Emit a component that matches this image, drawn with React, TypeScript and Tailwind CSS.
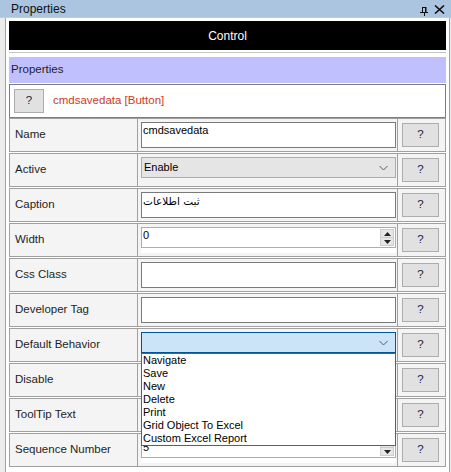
import React from "react";

const Btn = () => (
  <div className="w-[37px] h-[24px] bg-[#e1e1e1] border border-[#adadad] flex items-center justify-center text-[#1a1a40] text-[11.5px]">?</div>
);

const Chevron = () => (
  <svg width="9" height="5" viewBox="0 0 9 5" className="absolute right-[7px] top-1/2 -translate-y-1/2">
    <polyline points="0.5,0.5 4.5,4.5 8.5,0.5" fill="none" stroke="#5a5a5a" strokeWidth="1" />
  </svg>
);

const Spinner = () => (
  <div className="absolute right-[1px] top-[1px] bottom-[1px] w-[14px] flex flex-col bg-[#e6e6e6] border border-[#cdcdcd]">
    <div className="flex-1 flex items-center justify-center border-b border-[#cdcdcd]">
      <svg width="7" height="4" viewBox="0 0 7 4"><polygon points="0,4 7,4 3.5,0" fill="#222" /></svg>
    </div>
    <div className="flex-1 flex items-center justify-center">
      <svg width="7" height="4" viewBox="0 0 7 4"><polygon points="0,0 7,0 3.5,4" fill="#222" /></svg>
    </div>
  </div>
);

type Kind = "text" | "select" | "spin" | "open";

const Row = ({ label, kind, value, children }: { label: string; kind: Kind; value?: React.ReactNode; children?: React.ReactNode }) => {
  let field: React.ReactNode = null;
  if (kind === "text") {
    field = (
      <div className="w-[255px] h-[26px] bg-white border border-[#7a7a7a] pl-[1px] leading-[14px] text-[11px] text-black overflow-hidden">
        {value}
      </div>
    );
  } else if (kind === "select") {
    field = (
      <div className="relative w-[255px] h-[21px] bg-[#e5e5e5] border border-[#acacac] pl-[2px] flex items-center text-[11px] text-black">
        {value}
        <Chevron />
      </div>
    );
  } else if (kind === "spin") {
    field = (
      <div className="w-[255px] h-[26px] bg-white">
        <div className="relative w-[255px] h-[21px] bg-white border border-[#adadad] pl-[1px] leading-[14px] text-[11px] text-black">
          {value}
          <Spinner />
        </div>
      </div>
    );
  } else {
    field = (
      <div className="relative w-[255px] h-[21px] bg-[#cce4f7] border border-[#005499] flex items-center text-[11px]">
        <Chevron />
        {children}
      </div>
    );
  }
  return (
    <div className="flex h-[34px] border border-[#a0a0a0] bg-[#f4f4f4] mb-px">
      <div className="w-[128px] flex items-center pl-[5px] text-[#1e1e1e] border-r border-[#a0a0a0]">{label}</div>
      <div className="w-[260px] pl-[3px] pt-[3px] border-r border-[#a0a0a0]">{field}</div>
      <div className="w-[45px] flex items-center pl-[4px]">
        <Btn />
      </div>
    </div>
  );
};

export default function App() {
  const items = ["Navigate", "Save", "New", "Delete", "Print", "Grid Object To Excel", "Custom Excel Report"];
  return (
    <div className="w-[451px] h-[472px] overflow-hidden bg-[#ececec] flex flex-col font-['Liberation_Sans',Arial,sans-serif] text-[11.5px]">
      <div className="h-[17px] bg-[#abc4df] flex items-center pl-[11px] relative text-[#111] text-[12px]">
        <span>Properties</span>
        <svg width="9" height="9" viewBox="0 0 9 9" className="absolute left-[420px] top-[7px]">
          <rect x="2.5" y="0.5" width="3" height="5" fill="none" stroke="#111" strokeWidth="1" />
          <rect x="5" y="0" width="1.5" height="6" fill="#111" />
          <rect x="0" y="5" width="8" height="1" fill="#111" />
          <rect x="4" y="6" width="1" height="3" fill="#111" />
        </svg>
        <svg width="11" height="9" viewBox="0 0 11 9" className="absolute left-[434px] top-[5px]">
          <path d="M1 0.5 L10 8.5 M10 0.5 L1 8.5" stroke="#111" strokeWidth="1.6" fill="none" />
        </svg>
      </div>
      <div className="h-px bg-[#c8ccd2]" />
      <div className="flex-1 ml-[5px] mr-px border-x border-[#a0a0a0] bg-white px-[3px] pt-[3px] flex flex-col">
        <div className="h-[29px] bg-black text-white flex items-center justify-center text-[12px]">Control</div>
        <div className="h-px bg-[#c4c4c4] mt-[2px]" />
        <div className="h-[26px] bg-[#c0c0ff] mt-[4px] flex items-center pl-[2px] text-[#1e1e1e]">Properties</div>
        <div className="h-[34px] mt-px border border-[#7e7e7e] bg-white flex items-center pl-[4px]">
          <div className="w-[30px] h-[24px] bg-[#e1e1e1] border border-[#adadad] flex items-center justify-center text-[#1a1a40]">?</div>
          <span className="ml-[9px] text-[#cc3a1c]">cmdsavedata [Button]</span>
        </div>
        <Row label="Name" kind="text" value="cmdsavedata" />
        <Row label="Active" kind="select" value="Enable" />
        <Row
          label="Caption"
          kind="text"
          value={<span className="font-['DejaVu_Sans',sans-serif] text-[10.5px] leading-[16px]">ثبت اطلاعات</span>}
        />
        <Row label="Width" kind="spin" value="0" />
        <Row label="Css Class" kind="text" value="" />
        <Row label="Developer Tag" kind="text" value="" />
        <Row label="Default Behavior" kind="open">
          <div className="absolute left-[-1px] top-[20px] w-[255px] bg-white border border-[#1c6fbf] text-[11px] leading-[13px] text-black pl-[1px] z-10">
            {items.map((t) => (
              <div key={t}>{t}</div>
            ))}
          </div>
        </Row>
        <Row label="Disable" kind="select" value="" />
        <Row label="ToolTip Text" kind="text" value="" />
        <Row label="Sequence Number" kind="spin" value={<span className="relative top-[2px]">5</span>} />
      </div>
    </div>
  );
}
